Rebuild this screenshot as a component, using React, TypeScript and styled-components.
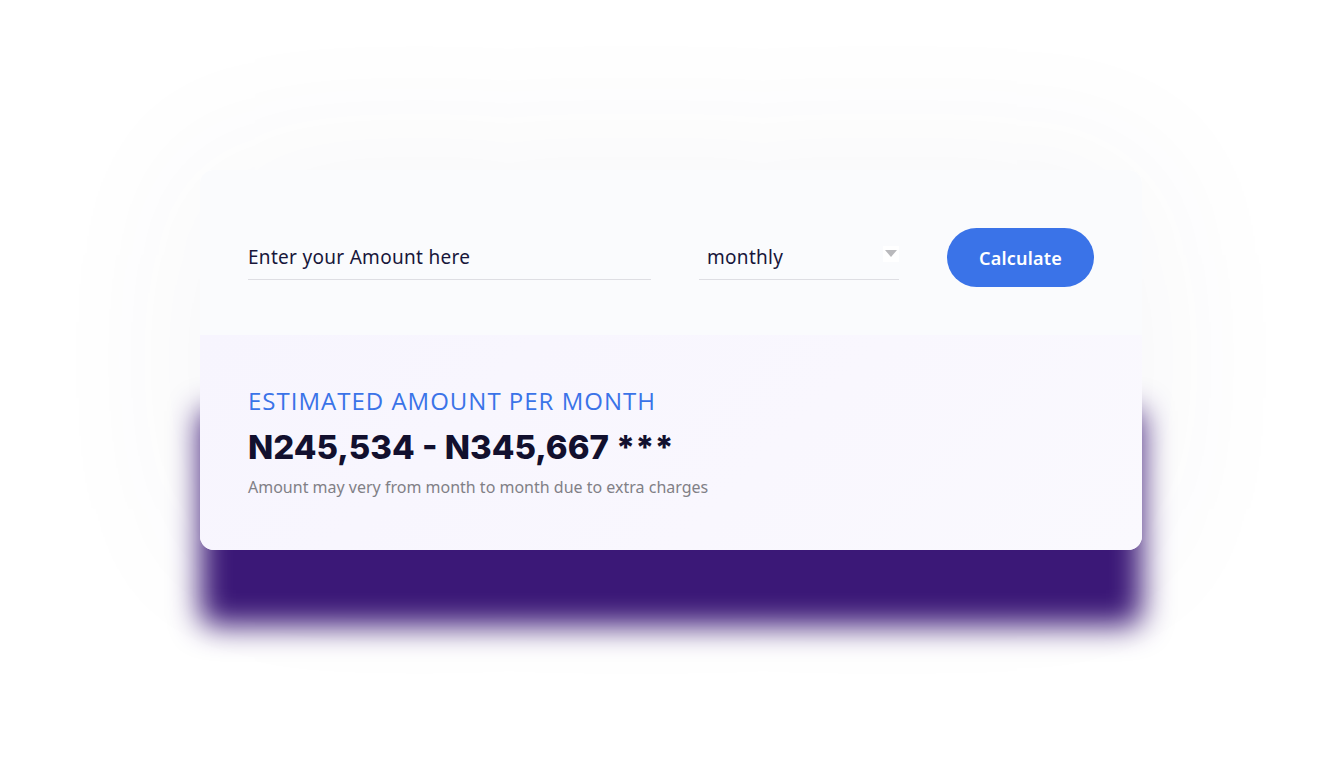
import React from "react";
import styled, { createGlobalStyle } from "styled-components";

const Global = createGlobalStyle`
  html, body { margin: 0; padding: 0; background: #ffffff; }
  body { font-family: "Noto Sans", "Open Sans", sans-serif; }
  * { box-sizing: border-box; }
`;

const Page = styled.main`
  width: 1342px;
  height: 771px;
  padding-top: 170px;
  display: flex;
  justify-content: center;
  align-items: flex-start;
  overflow: hidden;
`;

const Card = styled.section`
  width: 942px;
  display: flex;
  flex-direction: column;
  border-radius: 14px;
  box-shadow: 0 0 170px rgba(60, 60, 110, 0.06);
`;

const FormRow = styled.div`
  display: flex;
  align-items: center;
  gap: 48px;
  padding: 58px 48px 48px;
  background: #fafbfd;
  border-radius: 14px 14px 0 0;
`;

const AmountInput = styled.input`
  width: 403px;
  height: 44px;
  border: none;
  border-bottom: 1px solid #dedee3;
  background: transparent;
  padding: 0;
  font-family: "Noto Sans", sans-serif;
  font-size: 19px;
  letter-spacing: 0.3px;
  color: #17163a;
  outline: none;
  &::placeholder { color: #17163a; opacity: 1; }
`;

const SelectWrap = styled.div`
  position: relative;
  width: 200px;
  height: 44px;
  border-bottom: 1px solid #dedee3;
`;

const PeriodSelect = styled.select`
  appearance: none;
  width: 100%;
  height: 100%;
  border: none;
  background: transparent;
  padding: 0 0 0 8px;
  font-family: "Noto Sans", sans-serif;
  font-size: 19px;
  letter-spacing: 0.3px;
  color: #17163a;
  outline: none;
`;

const Caret = styled.span`
  position: absolute;
  right: 0;
  top: 10px;
  width: 16px;
  height: 16px;
  background: #ffffff;
  display: flex;
  align-items: center;
  justify-content: center;
  pointer-events: none;
`;

const CalcButton = styled.button`
  width: 147px;
  height: 59px;
  border: none;
  border-radius: 30px;
  background: #3a73e8;
  color: #ffffff;
  font-family: "Noto Sans", sans-serif;
  font-weight: 600;
  font-size: 18px;
  letter-spacing: 0.2px;
  cursor: pointer;
`;

const Results = styled.div`
  height: 215px;
  padding: 50px 48px 0;
  background: linear-gradient(135deg, #f7f5fe 0%, #f9f7fe 60%, #faf9fe 100%);
  border-radius: 0 0 14px 14px;
  box-shadow: 0 76px 30px #3b1877;
  display: flex;
  flex-direction: column;
`;

const Label = styled.h2`
  margin: 0;
  font-family: "Open Sans", sans-serif;
  font-weight: 400;
  font-size: 24px;
  line-height: 32px;
  letter-spacing: 1px;
  color: #3a73e8;
`;

const Amount = styled.p`
  margin: 10px 0 0;
  font-family: "Inter", sans-serif;
  font-weight: 800;
  font-size: 33px;
  line-height: 40px;
  letter-spacing: 0;
  color: #12102e;
`;

const Note = styled.p`
  margin: 10px 0 0;
  font-family: "Noto Sans", sans-serif;
  font-size: 16px;
  line-height: 20px;
  color: #818086;
`;

export default function App() {
  return (
    <>
      <Global />
      <Page>
        <Card>
          <FormRow>
            <AmountInput placeholder="Enter your Amount here" />
            <SelectWrap>
              <PeriodSelect defaultValue="monthly">
                <option value="monthly">monthly</option>
                <option value="weekly">weekly</option>
                <option value="yearly">yearly</option>
              </PeriodSelect>
              <Caret>
                <svg width="12" height="7" viewBox="0 0 12 7">
                  <path d="M0 0 H12 L6 7 Z" fill="#b9b9bc" />
                </svg>
              </Caret>
            </SelectWrap>
            <CalcButton>Calculate</CalcButton>
          </FormRow>
          <Results>
            <Label>ESTIMATED AMOUNT PER MONTH</Label>
            <Amount>N245,534 - N345,667 ***</Amount>
            <Note>Amount may very from month to month due to extra charges</Note>
          </Results>
        </Card>
      </Page>
    </>
  );
}
